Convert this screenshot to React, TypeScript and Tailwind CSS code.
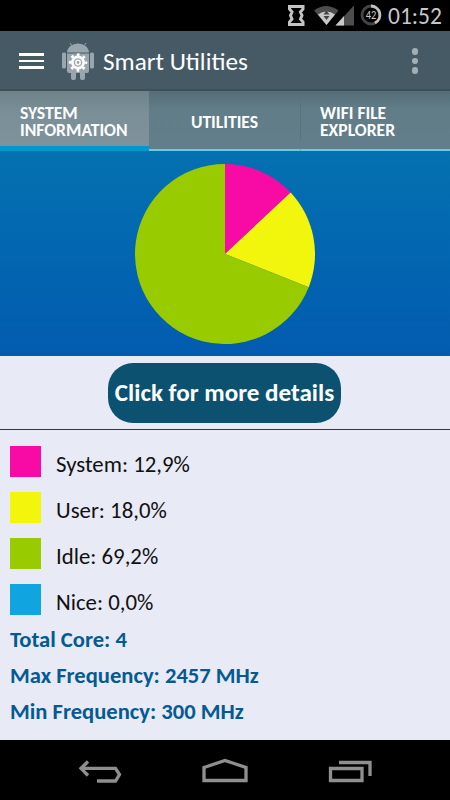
import { ReactNode } from "react";

interface Usage {
  label: string;
  value: string;
  percent: number;
  color: string;
}

const usages: Usage[] = [
  { label: "System", value: "12,9%", percent: 13, color: "#f80aa5" },
  { label: "User", value: "18,0%", percent: 18, color: "#f2f60c" },
  { label: "Idle", value: "69,2%", percent: 69, color: "#99cc00" },
  { label: "Nice", value: "0,0%", percent: 0, color: "#10a5e0" },
];

const specs = ["Total Core: 4", "Max Frequency: 2457 MHz", "Min Frequency: 300 MHz"];

function StatusBar() {
  return (
    <div className="h-[31px] shrink-0 bg-black flex items-center justify-end pr-[8px]">
      <svg width="98" height="31" viewBox="0 0 98 31" className="shrink-0">
        {/* Badge */}
        <path
          d="M3.500 6.500H17V9L14.500 12L16 15.500L14.500 19L17 22V24.500H3.500V22L6 19L4.500 15.500L6 12L3.500 9Z"
          fill="none"
          stroke="#c3c3c3"
          strokeWidth="3"
        />
        {/* Wifi */}
        <path d="M28 10.500Q40 1.500 52.500 10.500L40.500 25Z" fill="#4d4d4d" />
        <path d="M32 14.500Q40.500 8.500 49 14.500L40.500 25Z" fill="#c8c8c8" />
        <path d="M40.500 10.500L43.500 14.500H37.500ZM37.500 16H43.500L40.500 20Z" fill="#444" />
        {/* Cell signal */}
        <path d="M68 5.500V25.500H49.500Z" fill="#4d4d4d" />
        <path d="M58 16V25.500H49.500Z" fill="#c8c8c8" />
        {/* Battery ring */}
        <circle cx="85" cy="15" r="9" fill="none" stroke="#444" strokeWidth="2.800" />
        <path d="M85 6A9 9 0 0 1 89 23" fill="none" stroke="#c3c3c3" strokeWidth="2.800" />
        <text x="79.700" y="19" textLength="10.500" lengthAdjust="spacingAndGlyphs" fontSize="12.500" fill="#ccc">
          42
        </text>
      </svg>
      <span className="ml-[4px] w-[54px] pr-px pt-[2px] text-[23.500px] leading-none text-[#c8c8c8] text-right whitespace-nowrap">01:52</span>
    </div>
  );
}

function RobotIcon() {
  return (
    <svg width="34" height="38" viewBox="0 0 34 38" className="shrink-0">
      <g fill="#9aa6ad">
        <path d="M6 10.500A11 9 0 0 1 28 10.500Z" />
        <path d="M6 11.500H28V29Q28 31 26 31H8Q6 31 6 29Z" />
        <rect x="1" y="10.500" width="4" height="16" rx="1.500" />
        <rect x="29" y="10.500" width="4" height="16" rx="1.500" />
        <rect x="10" y="29" width="5" height="9" rx="2" />
        <rect x="19" y="29" width="5" height="9" rx="2" />
      </g>
      <path d="M9 1L11 4M25 1L23 4" stroke="#9aa6ad" strokeWidth="1" />
      {/* Gear */}
      <g fill="none" stroke="#fff">
        <circle cx="17" cy="20.500" r="7.800" strokeWidth="2.800" strokeDasharray="2.600 3.526" strokeDashoffset="1.300" />
        <circle cx="17" cy="20.500" r="5.600" strokeWidth="2.600" />
        <circle cx="17" cy="20.500" r="2.200" strokeWidth="1.500" />
      </g>
    </svg>
  );
}

function Header() {
  return (
    <header className="h-[60px] shrink-0 bg-[#465a65] border-b-2 border-[#3d4f58] flex items-center pl-[19px] pr-[32px] pt-[2px]">
      <button className="w-[25px] flex flex-col gap-[4px]">
        <span className="h-[2.500px] bg-white" />
        <span className="h-[2.500px] bg-white" />
        <span className="h-[2.500px] bg-white" />
      </button>
      <div className="ml-[17px]">
        <RobotIcon />
      </div>
      <h1 className="ml-[8px] pt-px text-[25.200px] leading-none text-white">Smart Utilities</h1>
      <button className="ml-auto flex flex-col gap-[3px]">
        <span className="size-[6.500px] rounded-full bg-[#a2b0b5]" />
        <span className="size-[6.500px] rounded-full bg-[#a2b0b5]" />
        <span className="size-[6.500px] rounded-full bg-[#a2b0b5]" />
      </button>
    </header>
  );
}

function Tab({ className, children }: { className: string; children: ReactNode }) {
  return (
    <button className={`h-full text-left text-[17.600px] leading-[17px] font-bold text-white flex items-center ${className}`}>
      <span>{children}</span>
    </button>
  );
}

function Tabs() {
  return (
    <nav className="h-[60px] shrink-0 flex bg-linear-to-b from-[#556d78] via-[#607d88] via-30% to-[#627e8a]">
      <Tab className="w-[149px] pl-5 pt-[6px] bg-linear-to-b from-[#6f8289] via-[#7a8f97] via-40% to-[#7d929b] border-b-5 border-[#0099cf]">
        SYSTEM
        <br />
        INFORMATION
      </Tab>
      <Tab className="w-[151px] justify-center pt-[4px] border-b-2 border-[#62cdea]">UTILITIES</Tab>
      <span className="w-px h-full pt-[10px] border-b-2 border-[#5bb0c8]">
        <span className="block h-[40px] bg-[#58737e]" />
      </span>
      <Tab className="flex-1 pl-[19px] pt-[3px] border-b-2 border-[#62cdea]">
        WIFI FILE
        <br />
        EXPLORER
      </Tab>
    </nav>
  );
}

function slicePath(from: number, to: number) {
  const point = (percent: number) => {
    const angle = (percent / 100) * Math.PI * 2;
    return `${90 + 90 * Math.sin(angle)} ${90 - 90 * Math.cos(angle)}`;
  };
  return `M90 90L${point(from)}A90 90 0 ${to - from > 50 ? 1 : 0} 1 ${point(to)}Z`;
}

function PieChart() {
  let start = 0;
  return (
    <svg width="180" height="180" viewBox="0 0 180 180">
      {usages
        .filter((u) => u.percent > 0)
        .map((u) => {
          const from = start;
          start += u.percent;
          return <path key={u.label} d={slicePath(from, start)} fill={u.color} />;
        })}
    </svg>
  );
}

function NavigationBar() {
  return (
    <footer className="h-[60px] shrink-0 bg-black flex items-center justify-center">
      <svg width="330" height="60" viewBox="0 0 330 60" fill="none" stroke="#8f8f8f" strokeWidth="3.300">
        <path d="M21 28.300H55.500L59.500 34.500L55.500 41H37M28 21.500L21 28.300L28 35.500" />
        <path d="M144 27.500L165 20.500L186 27.500V40.500H144Z" />
        <path d="M270.500 28.500H302V40.500H270.500ZM279 22.500H310V36" />
      </svg>
    </footer>
  );
}

export default function App() {
  return (
    <div className="w-[450px] h-[800px] flex flex-col overflow-hidden bg-[#e8eaf6] font-[Carlito,Lato,sans-serif]">
      <StatusBar />
      <Header />
      <Tabs />

      <main className="flex-1 flex flex-col">
        <section className="h-[205px] shrink-0 flex justify-center pt-[13px] bg-linear-to-b from-[#0571b0] to-[#035bb0]">
          <PieChart />
        </section>

        <div className="h-[74px] shrink-0 flex items-center justify-center pr-px border-b border-[#0f3a85]">
          <button className="w-[233px] h-[60px] pt-px rounded-[25px] bg-[#0c5270] text-[25.100px] font-bold text-white whitespace-nowrap">
            Click for more details
          </button>
        </div>

        {/* Legend */}
        <ul className="pt-[16px] pl-[10px] flex flex-col gap-[15px]">
          {usages.map((u) => (
            <li key={u.label} className="h-[31px] flex items-center gap-[15px]">
              <span className="size-[31px]" style={{ backgroundColor: u.color }} />
              <span className="pt-[5px] text-[22.800px] leading-none text-[#111]">
                {u.label}: {u.value}
              </span>
            </li>
          ))}
        </ul>

        <div className="pt-[6px] pl-[10px] text-[22.600px] leading-[36px] font-bold text-[#055a92]">
          {specs.map((spec) => (
            <p key={spec}>{spec}</p>
          ))}
        </div>
      </main>

      <NavigationBar />
    </div>
  );
}
